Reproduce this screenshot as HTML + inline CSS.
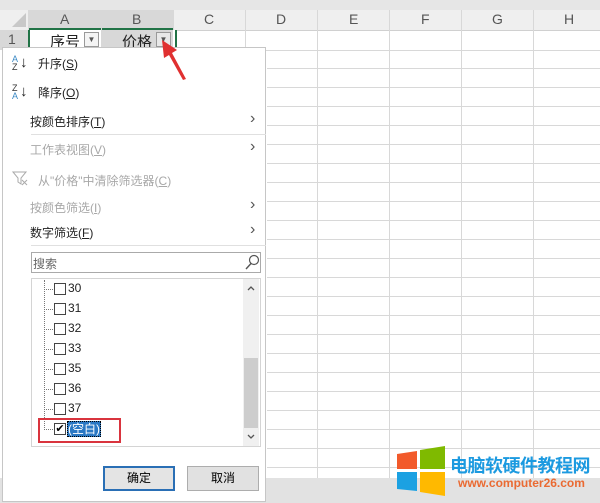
<html><head><style>
body{margin:0;width:600px;height:503px;overflow:hidden;background:#fff;font-family:"Liberation Sans","Noto Sans CJK SC",sans-serif;position:relative}
.a{position:absolute}
.t{position:absolute;font-size:12px;color:#222;white-space:nowrap}
.g{color:#a8a8a8}
.ar{position:absolute;left:250px;font-size:16px;line-height:16px;color:#555}
.cb{position:absolute;left:54px;width:10px;height:10px;border:1px solid #444;background:#fff}
.n{position:absolute;left:68px;font-size:12px;color:#222}
.dot{position:absolute;left:44px;width:9px;border-top:1px dotted #777}
.h{position:absolute;top:11px;font-size:14px;color:#555}
</style></head><body>
<div class="a" style="left:0;top:0;width:600px;height:10px;background:#e6e6e6"></div>
<div class="a" style="left:0;top:10px;width:600px;height:20px;background:#efefef;border-bottom:1px solid #d0d0d0"></div>
<div class="a" style="left:28px;top:10px;width:145px;height:20px;background:#d8d8d8;border-bottom:2px solid #217346;box-sizing:border-box"></div>
<svg class="a" style="left:0;top:0" width="600" height="503">
<g stroke="#d8d8d8" stroke-width="1">
<line x1="28.5" y1="10" x2="28.5" y2="503"/><line x1="101.5" y1="10" x2="101.5" y2="30"/><line x1="173.5" y1="10" x2="173.5" y2="50"/>
<line x1="245.5" y1="10" x2="245.5" y2="478"/><line x1="317.5" y1="10" x2="317.5" y2="478"/><line x1="389.5" y1="10" x2="389.5" y2="478"/><line x1="461.5" y1="10" x2="461.5" y2="478"/><line x1="533.5" y1="10" x2="533.5" y2="478"/>
<line x1="173" y1="50.5" x2="600" y2="50.5"/><line x1="267" y1="68.5" x2="600" y2="68.5"/><line x1="267" y1="87.5" x2="600" y2="87.5"/><line x1="267" y1="106.5" x2="600" y2="106.5"/><line x1="267" y1="125.5" x2="600" y2="125.5"/><line x1="267" y1="144.5" x2="600" y2="144.5"/><line x1="267" y1="163.5" x2="600" y2="163.5"/><line x1="267" y1="182.5" x2="600" y2="182.5"/><line x1="267" y1="201.5" x2="600" y2="201.5"/><line x1="267" y1="220.5" x2="600" y2="220.5"/><line x1="267" y1="239.5" x2="600" y2="239.5"/><line x1="267" y1="258.5" x2="600" y2="258.5"/><line x1="267" y1="277.5" x2="600" y2="277.5"/><line x1="267" y1="296.5" x2="600" y2="296.5"/><line x1="267" y1="315.5" x2="600" y2="315.5"/><line x1="267" y1="334.5" x2="600" y2="334.5"/><line x1="267" y1="353.5" x2="600" y2="353.5"/><line x1="267" y1="372.5" x2="600" y2="372.5"/><line x1="267" y1="391.5" x2="600" y2="391.5"/><line x1="267" y1="410.5" x2="600" y2="410.5"/><line x1="267" y1="429.5" x2="600" y2="429.5"/><line x1="267" y1="448.5" x2="600" y2="448.5"/><line x1="267" y1="467.5" x2="600" y2="467.5"/>
</g>
<polygon points="26,13 26,27 12,27" fill="#c8c8c8"/>
</svg>
<div class="a" style="left:0;top:30px;width:28px;height:20px;background:#d8d8d8"></div>
<div class="t" style="left:8px;top:31px;font-size:14px;color:#555">1</div>
<div class="h" style="left:60px">A</div>
<div class="h" style="left:132px">B</div>
<div class="h" style="left:204px">C</div>
<div class="h" style="left:276px">D</div>
<div class="h" style="left:349px">E</div>
<div class="h" style="left:421px">F</div>
<div class="h" style="left:492px">G</div>
<div class="h" style="left:564px">H</div>
<div class="a" style="left:28px;top:30px;width:145px;height:18px;border:2px solid #217346;border-top:0;background:#fff"></div>
<div class="a" style="left:101px;top:30px;width:72px;height:18px;background:#d8d8d8"></div>
<div class="t" style="left:50px;top:31px;font-size:15px">序号</div>
<div class="a" style="left:84px;top:32px;width:13px;height:13px;border:1px solid #999;background:#f4f4f4;font-size:8px;text-align:center;line-height:13px;color:#555">▼</div>
<div class="t" style="left:122px;top:31px;font-size:15px">价格</div>
<div class="a" style="left:156px;top:32px;width:13px;height:13px;border:1px solid #999;background:#e8e8e8;font-size:8px;text-align:center;line-height:13px;color:#555">▼</div>
<div class="a" style="left:0;top:478px;width:600px;height:25px;background:#e2e2e2"></div>
<!-- menu -->
<div class="a" style="left:2px;top:47px;width:264px;height:455px;background:#fff;border:1px solid #c6c6c6;box-sizing:border-box"></div>
<div class="t" style="left:12px;top:55px;font-size:9px;line-height:8px;color:#3b89c5">A<br><span style="color:#333">Z</span></div>
<div class="t" style="left:20px;top:54px;font-size:15px">↓</div>
<div class="t" style="left:38px;top:55px">升序(<u>S</u>)</div>
<div class="t" style="left:12px;top:84px;font-size:9px;line-height:8px;color:#333">Z<br><span style="color:#3b89c5">A</span></div>
<div class="t" style="left:20px;top:83px;font-size:15px">↓</div>
<div class="t" style="left:38px;top:84px">降序(<u>O</u>)</div>
<div class="t" style="left:30px;top:113px">按颜色排序(<u>T</u>)</div><div class="ar" style="top:111px">›</div>
<div class="a" style="left:31px;top:134px;width:235px;border-top:1px solid #e0e0e0"></div>
<div class="t g" style="left:30px;top:141px">工作表视图(<u>V</u>)</div><div class="ar g" style="top:139px">›</div>
<svg class="a" style="left:12px;top:170px" width="16" height="16"><path d="M1,2 H14 L9,8 V14 L6,12 V8 Z" fill="none" stroke="#aaa"/><path d="M10,10 L15,15 M15,10 L10,15" stroke="#aaa"/></svg>
<div class="t g" style="left:38px;top:172px">从"价格"中清除筛选器(<u>C</u>)</div>
<div class="t g" style="left:30px;top:199px">按颜色筛选(<u>I</u>)</div><div class="ar g" style="top:197px">›</div>
<div class="t" style="left:30px;top:224px">数字筛选(<u>F</u>)</div><div class="ar" style="top:222px">›</div>
<div class="a" style="left:31px;top:245px;width:235px;border-top:1px solid #e0e0e0"></div>
<div class="a" style="left:31px;top:252px;width:230px;height:21px;border:1px solid #aaa;box-sizing:border-box"></div>
<div class="t" style="left:33px;top:255px;color:#666">搜索</div>
<svg class="a" style="left:244px;top:254px" width="16" height="16"><circle cx="10" cy="6" r="4.5" fill="none" stroke="#555" stroke-width="1.2"/><line x1="7" y1="9.5" x2="2" y2="15" stroke="#555" stroke-width="1.4"/></svg>
<div class="a" style="left:31px;top:278px;width:230px;height:169px;border:1px solid #d4d4d4;box-sizing:border-box"></div>
<div class="a" style="left:243px;top:279px;width:16px;height:167px;background:#f0f0f0"></div>
<div class="a" style="left:244px;top:358px;width:14px;height:70px;background:#cdcdcd"></div>
<svg class="a" style="left:243px;top:282px" width="16" height="164"><path d="M5,8 L8,5 L11,8" fill="none" stroke="#555" stroke-width="1.3"/><path d="M5,153 L8,156 L11,153" fill="none" stroke="#555" stroke-width="1.3"/></svg>
<div class="a" style="left:44px;top:280px;height:150px;border-left:1px dotted #777"></div>
<div class="dot" style="top:289px"></div><div class="cb" style="top:283px"></div><div class="n" style="top:281px">30</div>
<div class="dot" style="top:309px"></div><div class="cb" style="top:303px"></div><div class="n" style="top:301px">31</div>
<div class="dot" style="top:329px"></div><div class="cb" style="top:323px"></div><div class="n" style="top:321px">32</div>
<div class="dot" style="top:349px"></div><div class="cb" style="top:343px"></div><div class="n" style="top:341px">33</div>
<div class="dot" style="top:369px"></div><div class="cb" style="top:363px"></div><div class="n" style="top:361px">35</div>
<div class="dot" style="top:389px"></div><div class="cb" style="top:383px"></div><div class="n" style="top:381px">36</div>
<div class="dot" style="top:409px"></div><div class="cb" style="top:403px"></div><div class="n" style="top:401px">37</div>
<div class="dot" style="top:429px"></div><div class="cb" style="top:423px;font-size:11px;line-height:10px;text-align:center">✔</div>
<div class="a" style="left:67px;top:421px;width:34px;height:16px;background:#2a78c4;border:1px dotted #000;box-sizing:border-box;color:#fff;font-size:12px;line-height:14px;text-align:center">(空白)</div>
<div class="a" style="left:38px;top:418px;width:83px;height:25px;border:2px solid #d9343e;box-sizing:border-box"></div>
<div class="a" style="left:103px;top:466px;width:72px;height:25px;border:2px solid #2a6fb5;background:#e4e4e4;box-sizing:border-box;font-size:12px;line-height:21px;text-align:center">确定</div>
<div class="a" style="left:187px;top:466px;width:72px;height:25px;border:1px solid #adadad;background:#e1e1e1;box-sizing:border-box;font-size:12px;line-height:23px;text-align:center">取消</div>
<!-- red arrow on top -->
<svg class="a" style="left:0;top:0" width="200" height="100"><polygon points="162,40 177,50 172,53 186,79 183,80 169,55 164,58" fill="#e03030"/></svg>
<!-- logo -->
<svg class="a" style="left:395px;top:444px" width="56" height="56">
<polygon points="2,10 22,7 22,25 2,25" fill="#f25a2b"/><polygon points="25,6 50,2 50,25 25,25" fill="#7fba00"/>
<polygon points="2,28 22,28 22,47 2,45" fill="#1ba1e2"/><polygon points="25,28 50,28 50,52 25,48" fill="#ffb900"/>
</svg>
<div class="t" style="left:450px;top:452px;font-size:18px;font-weight:bold;color:#1c9ae0;letter-spacing:-0.5px">电脑软硬件教程网</div>
<div class="t" style="left:458px;top:476px;font-size:12px;font-weight:bold;color:#ea6a32">www.computer26.com</div>
</body></html>
